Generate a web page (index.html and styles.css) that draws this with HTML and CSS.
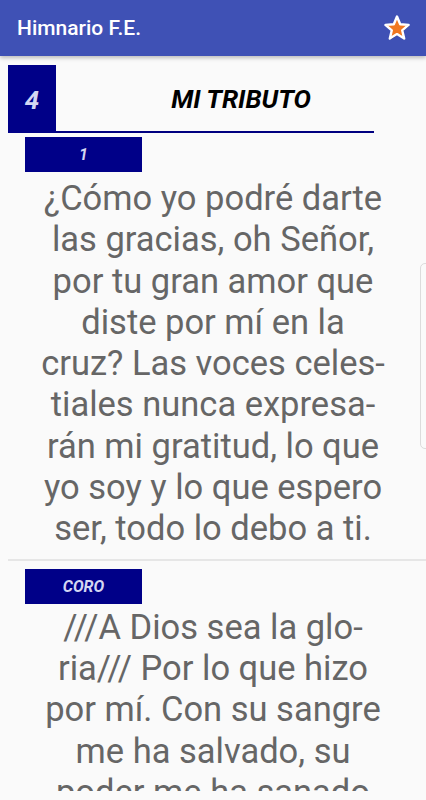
FILE: index.html
```html
<!DOCTYPE html>
<html lang="es">
<head>
<meta charset="utf-8">
<link rel="stylesheet" href="styles.css">
</head>
<body>
<header class="appbar">
  <h1 class="appbar-title">Himnario F.E.</h1>
  <svg class="star" width="28" height="28" viewBox="0 0 28 28">
    <polygon points="14,2.5 17.2,10.3 25.6,10.9 19.2,16.3 21.2,24.6 14,20.1 6.8,24.6 8.8,16.3 2.4,10.9 10.8,10.3" fill="#000" opacity="0.55" transform="translate(0.6,1.2)"/>
    <polygon points="14,2.5 17.2,10.3 25.6,10.9 19.2,16.3 21.2,24.6 14,20.1 6.8,24.6 8.8,16.3 2.4,10.9 10.8,10.3" fill="#f07820" stroke="#fff" stroke-width="2.4" stroke-linejoin="round"/>
  </svg>
</header>
<main class="content">
  <div class="hymn-head">
    <div class="hymn-num">4</div>
    <div class="hymn-title">MI TRIBUTO</div>
  </div>
  <section class="stanza">
    <div class="label">1</div>
    <p class="lyrics">¿Cómo yo podré darte<br>las gracias, oh Señor,<br>por tu gran amor que<br>diste por mí en la<br>cruz? Las voces celes-<br>tiales nunca expresa-<br>rán mi gratitud, lo que<br>yo soy y lo que espero<br>ser, todo lo debo a ti.</p>
  </section>
  <hr class="divider">
  <section class="stanza">
    <div class="label">CORO</div>
    <p class="lyrics chorus">///A Dios sea la glo-<br>ria/// Por lo que hizo<br>por mí. Con su sangre<br>me ha salvado, su<br>poder me ha sanado</p>
  </section>
  <div class="fastscroll"></div>
</main>
</body>
</html>
```
FILE: styles.css
```css
html, body {
  margin: 0;
  padding: 0;
}
body {
  background: #fafafa;
  font-family: Roboto, "Liberation Sans", sans-serif;
  width: 426px;
  height: 800px;
  overflow: hidden;
}
.appbar {
  height: 56px;
  background: #3f51b5;
  display: flex;
  align-items: center;
  justify-content: space-between;
  padding: 0 15px 0 17px;
  box-shadow: 0 2px 4px rgba(0,0,0,0.25);
  position: relative;
  z-index: 2;
}
.appbar-title {
  margin: 0;
  color: #fff;
  font-size: 21px;
  font-weight: 500;
}
.star {
  display: block;
  margin-top: -1px;
}
.content {
  position: relative;
  height: 735px;
  overflow: hidden;
  padding-top: 9px;
  box-sizing: border-box;
}
.hymn-head {
  display: flex;
  margin-left: 8px;
  height: 68px;
}
.hymn-num {
  width: 48px;
  background: #000088;
  color: #d3d6f2;
  font-size: 26px;
  font-weight: 700;
  font-style: italic;
  display: flex;
  align-items: center;
  justify-content: center;
  padding-top: 2px;
  box-sizing: border-box;
}
.hymn-title {
  flex: 1;
  margin-right: 52px;
  padding-left: 52px;
  border-bottom: 2px solid #000080;
  display: flex;
  align-items: center;
  justify-content: center;
  font-size: 26px;
  font-weight: 700;
  font-style: italic;
  color: #000;
  padding-top: 1px;
}
.stanza {
  display: flex;
  flex-direction: column;
}
.label {
  margin: 4px 0 0 25px;
  width: 117px;
  height: 35px;
  background: #000088;
  color: #d3d6f2;
  font-size: 16px;
  font-weight: 700;
  font-style: italic;
  display: flex;
  align-items: center;
  justify-content: center;
}
.lyrics {
  margin: 6px 0 0 0;
  text-align: center;
  color: #666;
  font-size: 34.5px;
  line-height: 41.3px;
  white-space: nowrap;
}
.chorus {
  margin-top: 3px;
}
.divider {
  margin: 9px 0 4px 8px;
  border: 0;
  border-top: 2px solid #e6e6e6;
}
.fastscroll {
  position: absolute;
  right: -6px;
  top: 207px;
  width: 10px;
  height: 184px;
  border: 1px solid #dcdcdc;
  border-radius: 5px;
}
```
